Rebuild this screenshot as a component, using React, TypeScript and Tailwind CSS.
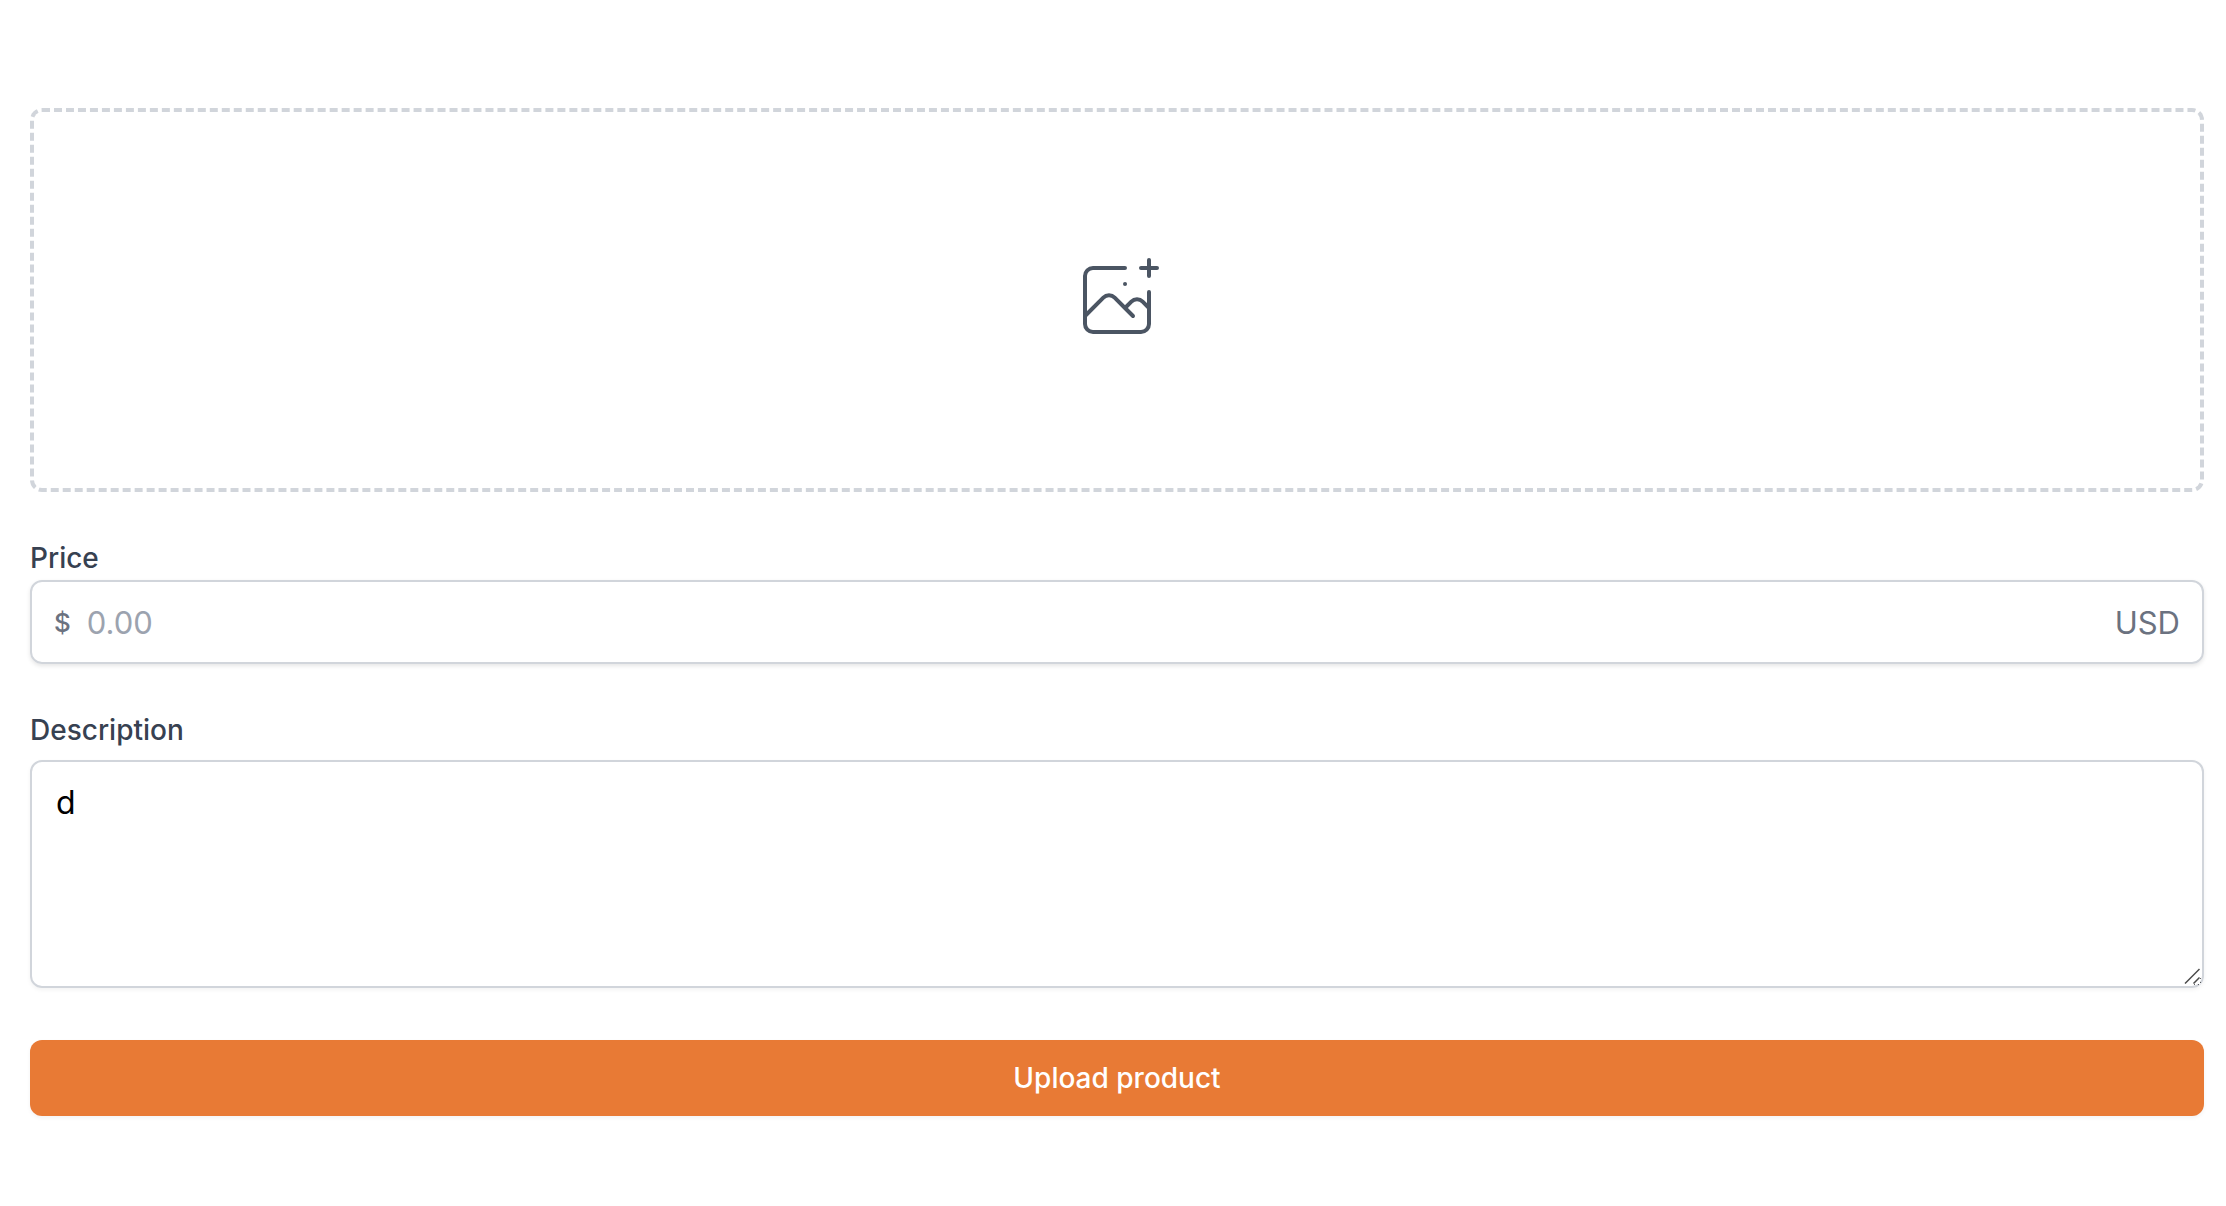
import { useState } from "react";

function PhotoPicker() {
  return (
    <label className="flex h-96 w-full cursor-pointer items-center justify-center rounded-xl border-4 border-dashed border-[#d1d5db] text-[#4b5563] hover:text-[#e87a35]">
      <svg className="size-24" viewBox="0 0 48 48" fill="none" stroke="currentColor" aria-hidden="true">
        <path
          d="M28 8H12a4 4 0 00-4 4v20m32-12v8m0 0v8a4 4 0 01-4 4H12a4 4 0 01-4-4v-4m32-4l-3.172-3.172a4 4 0 00-5.656 0L28 28M8 32l9.172-9.172a4 4 0 015.656 0L28 28m0 0l4 4m4-24h8m-4-4v8m-12 4h.02"
          strokeWidth={2}
          strokeLinecap="round"
          strokeLinejoin="round"
        />
      </svg>
      <input type="file" accept="image/*" aria-label="Product photo" className="hidden" />
    </label>
  );
}

function PriceField() {
  return (
    <div>
      <label htmlFor="price" className="block text-[28px] leading-10 font-medium text-[#374151]">
        Price
      </label>
      <div className="mt-0.5 flex h-[84px] items-center rounded-xl border-2 border-[#d1d5db] px-[22px] pt-0.5 shadow-[0_2px_4px_rgba(0,0,0,0.1)] focus-within:border-[#e87a35]">
        <span className="text-[26px] leading-10 font-medium text-[#6b7280]">$</span>
        <input
          id="price"
          type="text"
          inputMode="decimal"
          placeholder="0.00"
          className="ml-4 min-w-0 flex-1 text-[31px] leading-12 outline-none placeholder:text-[#9ca3af]"
        />
        <span className="text-[31px] leading-12 text-[#6b7280]">USD</span>
      </div>
    </div>
  );
}

function DescriptionField() {
  const [text, setText] = useState("d");
  return (
    <div>
      <label htmlFor="description" className="block text-[28px] leading-10 font-medium text-[#374151]">
        Description
      </label>
      <div className="relative mt-2.5">
        <textarea
          id="description"
          rows={4}
          value={text}
          onChange={(e) => setText(e.target.value)}
          className="block w-full rounded-xl border-2 border-[#d1d5db] px-6 pt-[17px] pb-[15px] text-[32px] leading-12 text-black shadow-[0_2px_4px_rgba(0,0,0,0.05)] outline-none focus:border-[#e87a35]"
        />
        <svg
          className="pointer-events-none absolute right-1 bottom-1 size-4 bg-white"
          viewBox="0 0 16 16"
          fill="none"
          stroke="#4b4b4b"
          strokeWidth={1.5}
          aria-hidden="true"
        >
          <path d="M1 15.5L15.5 1M9.5 15.5L15.5 9.5" />
        </svg>
      </div>
    </div>
  );
}

export default function App() {
  return (
    <main className="min-h-screen bg-white pt-[108px] pr-[22px] pb-20 pl-[30px] font-['Inter',sans-serif]">
      <form onSubmit={(e) => e.preventDefault()}>
        <PhotoPicker />
        <div className="mt-[46px]">
          <PriceField />
        </div>
        <div className="mt-[46px]">
          <DescriptionField />
        </div>
        <button
          type="submit"
          className="mt-[52px] block w-full cursor-pointer rounded-xl bg-[#e87a35] py-[18px] text-[28px] leading-10 font-medium text-white shadow-[0_2px_4px_rgba(0,0,0,0.05)] hover:bg-[#d96a26]"
        >
          Upload product
        </button>
      </form>
    </main>
  );
}
